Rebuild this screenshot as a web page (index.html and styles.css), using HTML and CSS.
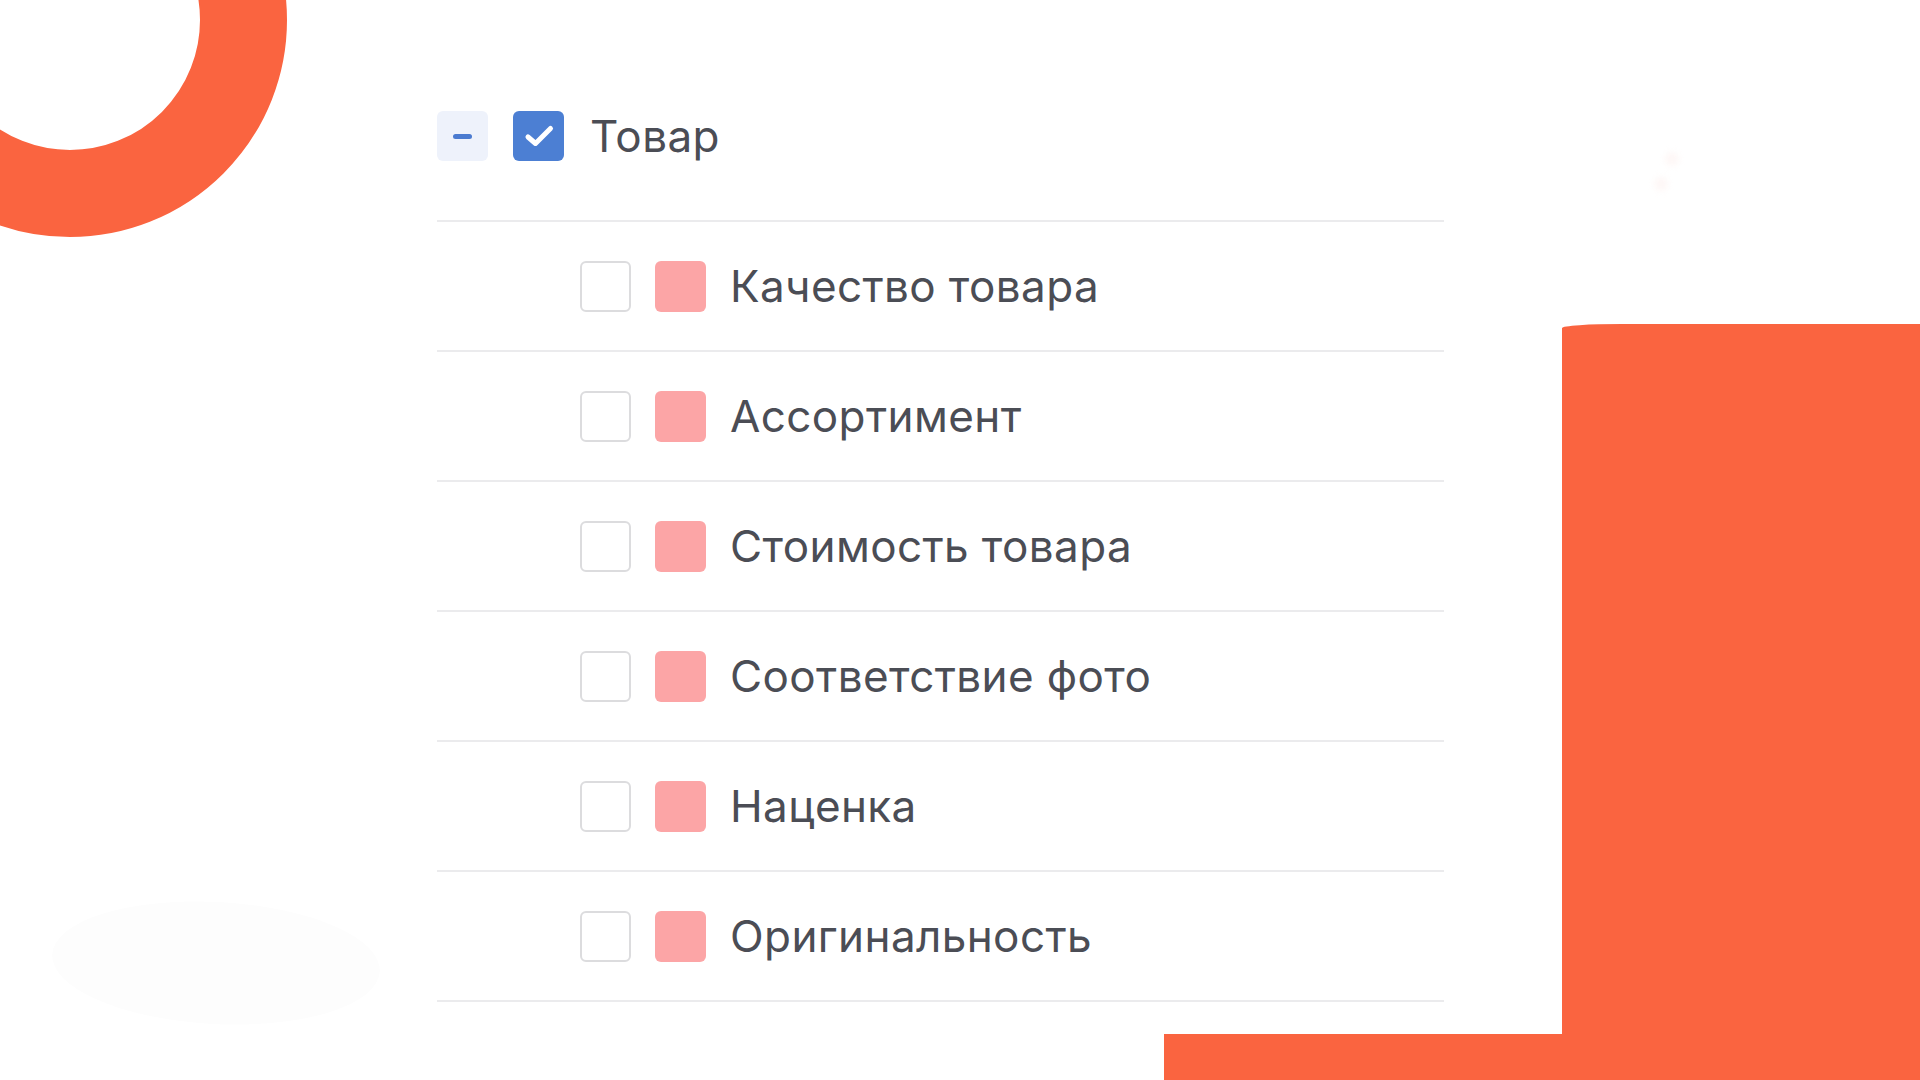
FILE: index.html
```html
<!DOCTYPE html>
<html lang="ru">
<head>
<meta charset="utf-8">
<title>Товар</title>
<link rel="stylesheet" href="styles.css">
</head>
<body>
<div class="deco ring"></div>
<div class="deco block"></div>
<div class="deco strip"></div>
<div class="deco blob"></div>
<div class="deco spot spot-a"></div>
<div class="deco spot spot-b"></div>

<main class="tree">
  <div class="group-head">
    <span class="toggle"><span class="minus"></span></span>
    <span class="box box-checked">
      <svg viewBox="0 0 50 50" width="50" height="50"><path d="M14 26 L21.5 32.5 L36.5 17.5" fill="none" stroke="#fff" stroke-width="5" stroke-linecap="round" stroke-linejoin="round"/></svg>
    </span>
    <span class="label">Товар</span>
  </div>
  <ul class="items">
    <li class="item"><span class="box"></span><span class="swatch"></span><span class="label">Качество товара</span></li>
    <li class="item"><span class="box"></span><span class="swatch"></span><span class="label">Ассортимент</span></li>
    <li class="item"><span class="box"></span><span class="swatch"></span><span class="label">Стоимость товара</span></li>
    <li class="item"><span class="box"></span><span class="swatch"></span><span class="label">Соответствие фото</span></li>
    <li class="item"><span class="box"></span><span class="swatch"></span><span class="label">Наценка</span></li>
    <li class="item"><span class="box"></span><span class="swatch"></span><span class="label">Оригинальность</span></li>
  </ul>
</main>
</body>
</html>
```

FILE: styles.css
```css
html, body {
  margin: 0;
  padding: 0;
  width: 1920px;
  height: 1080px;
  overflow: hidden;
  background: #ffffff;
  font-family: "Inter", "Noto Sans", sans-serif;
}

body {
  position: relative;
}

.deco {
  position: absolute;
  z-index: 0;
}

.ring {
  left: -147px;
  top: -197px;
  width: 434px;
  height: 434px;
  box-sizing: border-box;
  border: 87px solid #fa6440;
  border-radius: 50%;
}

.block {
  left: 1562px;
  top: 324px;
  right: 0;
  bottom: 0;
  background: #fa6440;
  border-top-left-radius: 60px 4px;
}

.strip {
  left: 1164px;
  top: 1034px;
  width: 420px;
  bottom: 0;
  background: #fa6440;
}

.blob {
  left: 52px;
  top: 902px;
  width: 328px;
  height: 122px;
  border-radius: 50%;
  background: #fdfdfd;
  transform: rotate(3deg);
}

.spot {
  width: 14px;
  height: 14px;
  border-radius: 50%;
  background: #fef7f6;
  filter: blur(3px);
}

.spot-a { left: 1665px; top: 152px; }
.spot-b { left: 1654px; top: 177px; }

.tree {
  position: relative;
  z-index: 1;
  width: 1007px;
  margin-left: 437px;
  padding-top: 111px;
}

.group-head {
  display: flex;
  align-items: center;
  height: 50px;
  padding-bottom: 59px;
  border-bottom: 2px solid #ebebed;
}

.toggle {
  width: 51px;
  height: 50px;
  border-radius: 6px;
  background: #eef2fb;
  display: flex;
  align-items: center;
  justify-content: center;
  margin-right: 25px;
}

.minus {
  width: 19px;
  height: 5px;
  border-radius: 3px;
  background: #4b7bd0;
}

.box {
  width: 51px;
  height: 51px;
  box-sizing: border-box;
  border-radius: 6px;
  border: 2px solid #dcdcde;
  background: #fff;
  flex: none;
  margin-right: 24px;
}

.box-checked {
  width: 51px;
  height: 50px;
  border: none;
  background: #4c7fd3;
  display: flex;
  align-items: center;
  justify-content: center;
  margin-right: 26px;
}

.box-checked svg {
  display: block;
}

.label {
  font-size: 44px;
  color: #4b4d55;
  letter-spacing: 0.4px;
  line-height: 1;
}

.items {
  list-style: none;
  margin: 0;
  padding: 0;
}

.item {
  display: flex;
  align-items: center;
  height: 128px;
  padding-left: 143px;
  border-bottom: 2px solid #ebebed;
}

.swatch {
  width: 51px;
  height: 51px;
  border-radius: 6px;
  background: #fca5a6;
  flex: none;
  margin-right: 24px;
}
```
